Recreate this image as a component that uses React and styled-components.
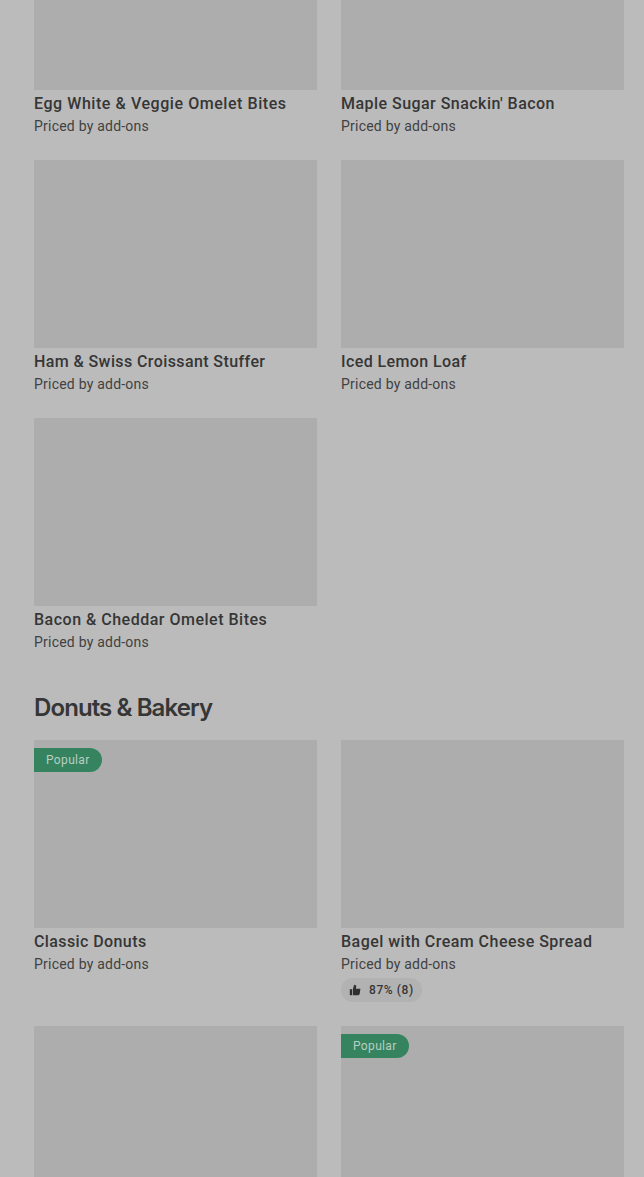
import React from 'react';
import styled, { createGlobalStyle } from 'styled-components';

const GlobalStyle = createGlobalStyle`
  * { box-sizing: border-box; }
  html, body { margin: 0; background: #bbbbbb; }
  body { font-family: Roboto, "Liberation Sans", sans-serif; color: #363636; }
`;

const Page = styled.main`
  width: 644px;
  height: 1177px;
  overflow: hidden;
  padding: 0 20px 0 34px;
  background: #bbbbbb;
`;

const Grid = styled.div`
  display: grid;
  grid-template-columns: 283px 283px;
  gap: 24px;
  margin-top: ${(p) => p.$offset || 0}px;
`;

const Card = styled.article`
  display: flex;
  flex-direction: column;
  align-items: flex-start;
`;

const Photo = styled.div`
  position: relative;
  width: 100%;
  height: 188px;
  background: #adadad;
`;

const PopularTag = styled.span`
  position: absolute;
  top: 8px;
  left: 0;
  width: 68px;
  height: 24px;
  padding-left: 12px;
  border-radius: 0 12px 12px 0;
  background: #35845f;
  color: #b9cec3;
  font-size: 12px;
  line-height: 24px;
  letter-spacing: 0.35px;
`;

const Title = styled.h3`
  margin: 2px 0 0;
  font-size: 16px;
  line-height: 24px;
  font-weight: 500;
  white-space: nowrap;
  letter-spacing: ${(p) => p.$tracking || 0}px;
`;

const Price = styled.p`
  margin: 0;
  font-size: 14px;
  line-height: 20px;
  letter-spacing: 0.22px;
  color: #414141;
`;

const Rating = styled.div`
  display: flex;
  align-items: center;
  gap: 8px;
  width: 81px;
  height: 24px;
  margin-top: 4px;
  padding-left: 8px;
  border-radius: 12px;
  background: #b2b2b2;
  font-size: 12px;
  font-weight: 500;
  white-space: nowrap;
  letter-spacing: 0.6px;
`;

const SectionTitle = styled.h2`
  margin: 40px 0 16px;
  font-family: Inter, Roboto, sans-serif;
  font-size: 24px;
  line-height: 32px;
  font-weight: 600;
  letter-spacing: -0.9px;
  white-space: nowrap;
`;

const ThumbUp = () => (
  <svg width="12" height="12" viewBox="0 0 12 12" fill="#303030" aria-hidden="true">
    <path d="M0.8 5.2H3V11.2H0.8Z" />
    <path d="M3.8 5.2 5.2 0.8C6.8 0.8 7.4 1.5 7.2 2.7L6.9 4.7H11.4L10.7 9.8C10.6 10.7 10 11.2 9.1 11.2H3.8Z" />
  </svg>
);

const breakfast = [
  { name: 'Egg White & Veggie Omelet Bites', tracking: 0.56 },
  { name: "Maple Sugar Snackin' Bacon", tracking: 0.46 },
  { name: 'Ham & Swiss Croissant Stuffer', tracking: 0.4 },
  { name: 'Iced Lemon Loaf', tracking: 0.4 },
  { name: 'Bacon & Cheddar Omelet Bites', tracking: 0.5 },
];

const bakery = [
  { name: 'Classic Donuts', tracking: 0.4, popular: true },
  { name: 'Bagel with Cream Cheese Spread', tracking: 0.47, rating: '87% (8)' },
  {},
  { popular: true },
];

const MenuItem = ({ name, tracking, popular, rating }) => (
  <Card>
    <Photo>{popular && <PopularTag>Popular</PopularTag>}</Photo>
    {name && <Title $tracking={tracking}>{name}</Title>}
    {name && <Price>Priced by add-ons</Price>}
    {rating && (
      <Rating>
        <ThumbUp />
        <span>{rating}</span>
      </Rating>
    )}
  </Card>
);

export default function App() {
  return (
    <>
      <GlobalStyle />
      <Page>
        <Grid $offset={-98}>
          {breakfast.map((item, i) => <MenuItem key={i} {...item} />)}
        </Grid>
        <SectionTitle>Donuts &amp; Bakery</SectionTitle>
        <Grid>
          {bakery.map((item, i) => <MenuItem key={i} {...item} />)}
        </Grid>
      </Page>
    </>
  );
}
